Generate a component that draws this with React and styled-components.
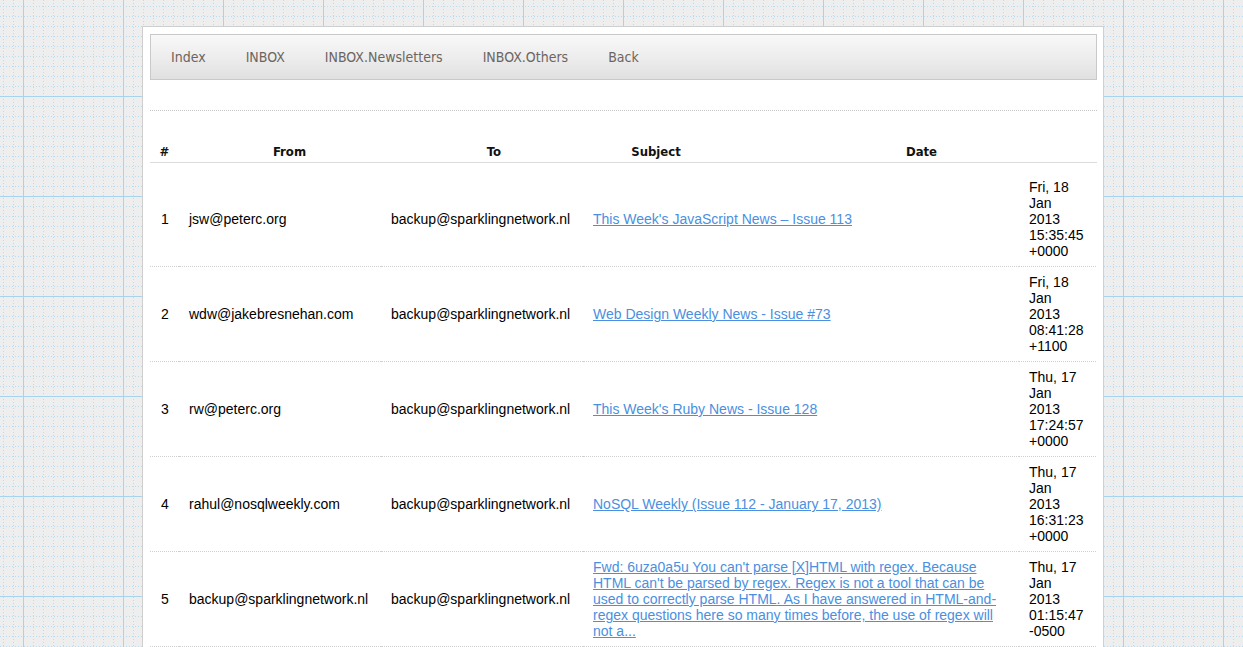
import React from "react";
import styled, { createGlobalStyle } from "styled-components";

const GlobalStyle = createGlobalStyle`
  html, body {
    margin: 0;
    padding: 0;
  }

  body {
    min-height: 100vh;
    background-color: #eeeeee;
    background-image:
      linear-gradient(to right, #a6d4ee 1px, transparent 1px),
      linear-gradient(to bottom, #a6d4ee 1px, transparent 1px),
      conic-gradient(at 1px 1px, transparent 75%, #b9ddf0 0),
      conic-gradient(at 1px 1px, transparent 75%, #b9ddf0 0);
    background-size: 100px 100px, 100px 100px, 10px 3px, 3px 10px;
    background-position: 23px 0, 0 96px, 3px 0, 0 6px;
    font-family: "Liberation Sans", Arial, sans-serif;
  }
`;

const Page = styled.div`
  padding-left: 3px;
`;

const Panel = styled.div`
  width: 960px;
  margin: 26px auto 0;
  padding: 7px 6px 0 7px;
  box-sizing: border-box;
  background: #fff;
  border: 1px solid #cfcfcf;
  border-bottom: none;
  min-height: 640px;
  width: 962px;
`;

const NavBar = styled.nav`
  display: flex;
  height: 44px;
  border: 1px solid #c9c9c9;
  background: linear-gradient(to bottom, #f8f8f8 0%, #ececec 55%, #e0e0e0 100%);
  padding-left: 0;
`;

const NavLink = styled.a`
  display: block;
  padding: 0 20px;
  line-height: 44px;
  font-family: "DejaVu Sans Condensed", "DejaVu Sans", sans-serif;
  font-stretch: condensed;
  font-size: 14px;
  color: #6c6460;
  text-decoration: none;
  cursor: pointer;
`;

const Divider = styled.div`
  margin-top: 30px;
  border-top: 1px dotted #c4c4c4;
`;

const HeaderRow = styled.div`
  display: grid;
  grid-template-columns: 29px 221px 188px 136px 1fr;
  margin-top: 33px;
  border-bottom: 1px solid #dcdcdc;
`;

const HeaderCell = styled.div`
  padding: 0 0 2px ${(p) => p.$shift || 0}px;
  line-height: 16px;
  text-align: center;
  font-family: "DejaVu Sans Condensed", "DejaVu Sans", sans-serif;
  font-stretch: condensed;
  font-weight: bold;
  font-size: 13px;
  color: #111;
`;

const MailTable = styled.table`
  width: 946px;
  margin-top: 9px;
  border-collapse: collapse;
  table-layout: fixed;
  font-size: 14px;
  line-height: 16px;
  color: #000;
`;

const Cell = styled.td`
  padding: 7px 10px 7px ${(p) => (p.$first ? 11 : 10)}px;
  vertical-align: middle;
  border-bottom: 1px dotted #cfcfcf;
  word-wrap: break-word;
`;

const SubjectLink = styled.a`
  color: #4a8fe0;
  text-decoration: underline;
  cursor: pointer;
`;

const DateText = styled.div`
  white-space: normal;
`;

const navItems = ["Index", "INBOX", "INBOX.Newsletters", "INBOX.Others", "Back"];

const mails = [
  {
    from: "jsw@peterc.org",
    subject: "This Week's JavaScript News – Issue 113",
    date: "Fri, 18 Jan 2013 15:35:45 +0000",
  },
  {
    from: "wdw@jakebresnehan.com",
    subject: "Web Design Weekly News - Issue #73",
    date: "Fri, 18 Jan 2013 08:41:28 +1100",
  },
  {
    from: "rw@peterc.org",
    subject: "This Week's Ruby News - Issue 128",
    date: "Thu, 17 Jan 2013 17:24:57 +0000",
  },
  {
    from: "rahul@nosqlweekly.com",
    subject: "NoSQL Weekly (Issue 112 - January 17, 2013)",
    date: "Thu, 17 Jan 2013 16:31:23 +0000",
  },
  {
    from: "backup@sparklingnetwork.nl",
    subject:
      "Fwd: 6uza0a5u You can't parse [X]HTML with regex. Because HTML can't be parsed by regex. Regex is not a tool that can be used to correctly parse HTML. As I have answered in HTML-and-regex questions here so many times before, the use of regex will not a...",
    date: "Thu, 17 Jan 2013 01:15:47 -0500",
  },
];

const App = () => {
  return (
    <Page>
      <GlobalStyle />
      <Panel>
        <NavBar>
          {navItems.map((item) => (
            <NavLink key={item}>{item}</NavLink>
          ))}
        </NavBar>
        <Divider />

        <HeaderRow>
          <HeaderCell>#</HeaderCell>
          <HeaderCell>From</HeaderCell>
          <HeaderCell>To</HeaderCell>
          <HeaderCell>Subject</HeaderCell>
          <HeaderCell $shift={22}>Date</HeaderCell>
        </HeaderRow>

        <MailTable>
          <colgroup>
            <col style={{ width: 29 }} />
            <col style={{ width: 202 }} />
            <col style={{ width: 202 }} />
            <col style={{ width: 436 }} />
            <col style={{ width: 77 }} />
          </colgroup>
          <tbody>
            {mails.map((mail, i) => (
              <tr key={i}>
                <Cell $first>{i + 1}</Cell>
                <Cell>{mail.from}</Cell>
                <Cell>backup@sparklingnetwork.nl</Cell>
                <Cell>
                  <SubjectLink>{mail.subject}</SubjectLink>
                </Cell>
                <Cell>
                  <DateText>{mail.date}</DateText>
                </Cell>
              </tr>
            ))}
          </tbody>
        </MailTable>
      </Panel>
    </Page>
  );
};

export default App;
